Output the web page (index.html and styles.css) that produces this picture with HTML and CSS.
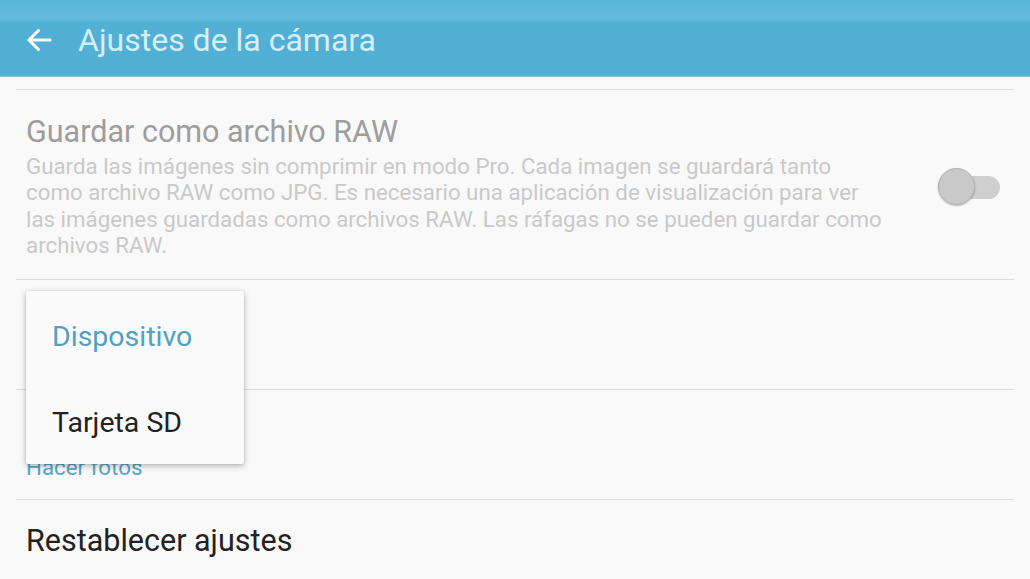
FILE: index.html
```html
<!DOCTYPE html>
<html lang="es">
<head>
<meta charset="utf-8">
<title>Ajustes de la cámara</title>
<link rel="stylesheet" href="styles.css">
</head>
<body>
<div class="app">
  <header class="appbar">
    <svg class="back" width="26" height="24" viewBox="0 0 26 24" aria-hidden="true">
      <path d="M24 12H3M12.5 2.5L3 12l9.5 9.5" fill="none" stroke="#ffffff" stroke-width="3" stroke-linecap="round" stroke-linejoin="round"/>
    </svg>
    <h1 class="title">Ajustes de la cámara</h1>
  </header>
  <main class="list">
    <div class="spacer"></div>
    <div class="row row-raw">
      <div class="text">
        <div class="row-title disabled">Guardar como archivo RAW</div>
        <div class="row-desc">Guarda las imágenes sin comprimir en modo Pro. Cada imagen se guardará tanto<br>como archivo RAW como JPG. Es necesario una aplicación de visualización para ver<br>las imágenes guardadas como archivos RAW. Las ráfagas no se pueden guardar como<br>archivos RAW.</div>
      </div>
      <div class="switch"><span class="thumb"></span></div>
    </div>
    <div class="row row-mid"></div>
    <div class="row row-mid">
      <div class="text">
        <div class="row-title hidden-title">&nbsp;</div>
        <div class="row-sub">Hacer fotos</div>
      </div>
    </div>
    <div class="row row-last">
      <div class="row-title">Restablecer ajustes</div>
    </div>
  </main>
  <div class="menu">
    <div class="menu-item selected">Dispositivo</div>
    <div class="menu-item">Tarjeta SD</div>
  </div>
</div>
</body>
</html>
```
FILE: styles.css
```css
* { box-sizing: border-box; }
html, body { margin: 0; padding: 0; }
body {
  width: 1030px;
  height: 579px;
  overflow: hidden;
  background: #f9f9f9;
  font-family: Roboto, "Noto Sans", "Liberation Sans", sans-serif;
}
.app { position: relative; width: 1030px; height: 579px; }
.appbar {
  height: 77px;
  display: flex;
  align-items: center;
  padding-left: 26px;
  padding-top: 3px;
  background: linear-gradient(180deg, #5ab6da 0px, #63bade 18px, #53b0d5 23px, #52afd4 100%);
  border-bottom: 1px solid #7fc3de;
}
.back { flex: none; }
.title {
  margin: 0 0 0 26px;
  font-weight: 400;
  font-size: 32px;
  color: #d5eef8;
}
.list { padding: 0 16px; }
.spacer { height: 13px; border-bottom: 1px solid #dcdcdc; }
.row {
  display: flex;
  align-items: center;
  padding: 0 10px;
  border-bottom: 1px solid #dcdcdc;
}
.row-raw { height: 190px; padding-top: 4px; justify-content: space-between; }
.row-raw .text { flex: none; width: 880px; }
.row-mid { height: 110px; }
.row-last { height: 80px; border-bottom: none; padding-top: 2px; }
.row-title {
  font-size: 30.5px;
  line-height: 34px;
  color: #222222;
}
.row-title.disabled { color: #9d9d9d; }
.row-desc {
  margin-top: 4px;
  font-size: 22.3px;
  line-height: 26.5px;
  color: #c9c9c9;
  white-space: nowrap;
}
.row-sub {
  margin-top: 6px;
  font-size: 22.3px;
  line-height: 26px;
  color: #55a6c5;
}
.row-mid .text { padding-top: 4px; }
.switch {
  position: relative;
  flex: none;
  width: 62px;
  height: 38px;
  margin-right: 4px;
}
.switch::before {
  content: "";
  position: absolute;
  right: 0;
  top: 8px;
  width: 44px;
  height: 23px;
  border-radius: 12px;
  background: #cfcfcf;
}
.thumb {
  position: absolute;
  left: 0;
  top: 0;
  width: 37px;
  height: 37px;
  border-radius: 50%;
  background: #c9c9c9;
  border: 1px solid #b2b2b2;
  box-shadow: 0 1px 2px rgba(0,0,0,0.25);
}
.menu {
  position: absolute;
  left: 26px;
  top: 291px;
  width: 218px;
  height: 173px;
  background: #fafafa;
  border-radius: 2px;
  box-shadow: 0 2px 6px rgba(0,0,0,0.28), 0 0 2px rgba(0,0,0,0.12);
}
.menu-item {
  height: 86.5px;
  display: flex;
  align-items: center;
  padding-left: 26px;
  padding-top: 4px;
  font-size: 28.5px;
  color: #222222;
}
.menu-item.selected { color: #4fa2c2; }
```
